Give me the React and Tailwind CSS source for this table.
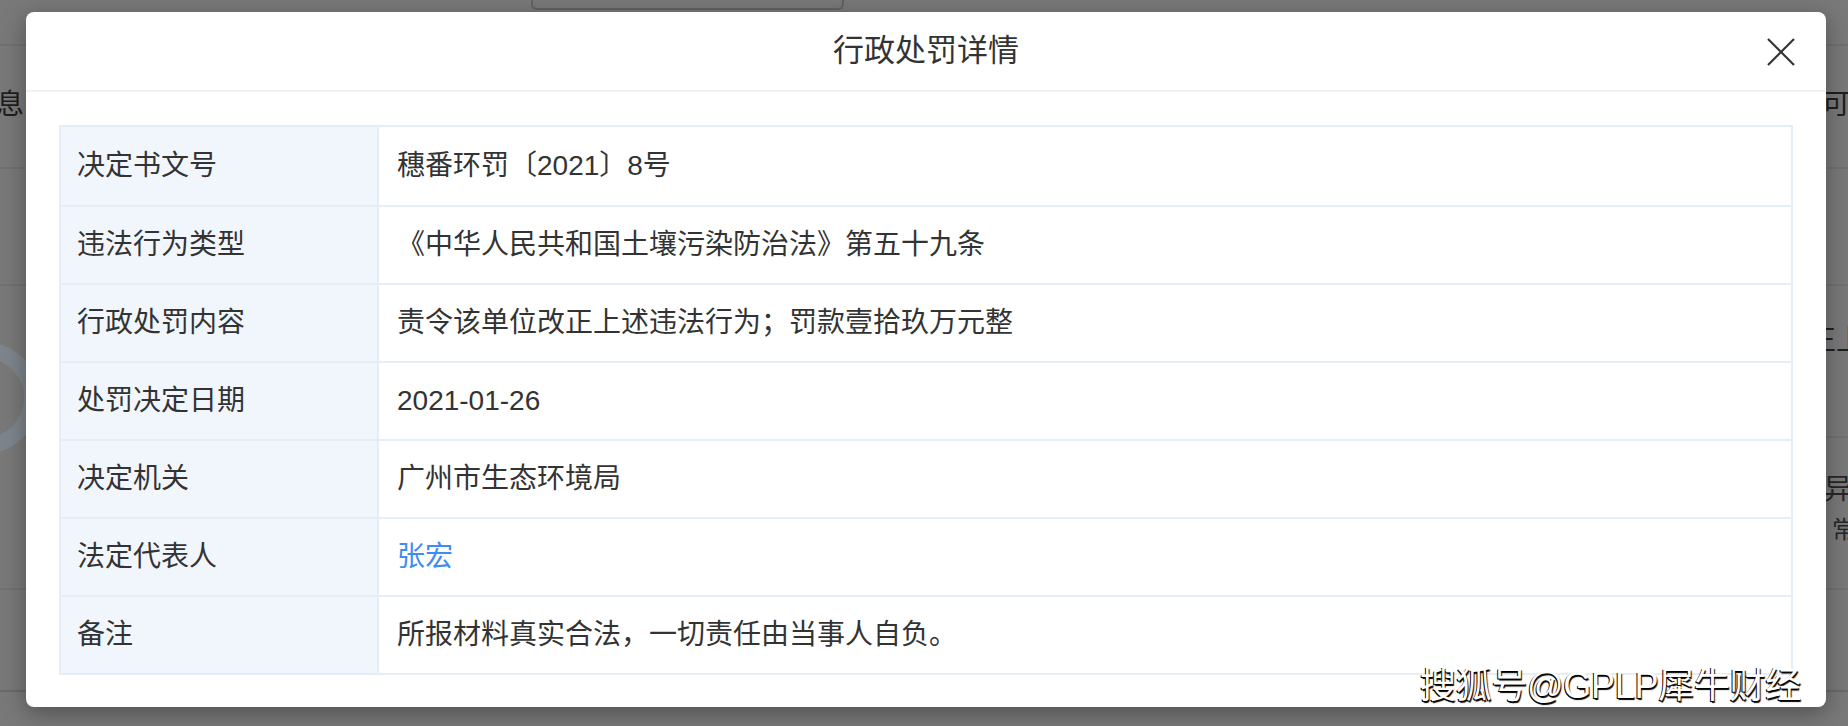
import React from 'react';

const rows = [
  { label: '决定书文号', value: '穗番环罚〔2021〕8号' },
  { label: '违法行为类型', value: '《中华人民共和国土壤污染防治法》第五十九条' },
  { label: '行政处罚内容', value: '责令该单位改正上述违法行为；罚款壹拾玖万元整' },
  { label: '处罚决定日期', value: '2021-01-26' },
  { label: '决定机关', value: '广州市生态环境局' },
  { label: '法定代表人', value: '张宏', link: true },
  { label: '备注', value: '所报材料真实合法，一切责任由当事人自负。' },
];

function BackdropPage() {
  // the page underneath the dialog, dimmed by the mask
  return (
    <div className="flex flex-col text-[28px] text-[#1e1e1e]">
      <div className="h-[44px]">
        <div className="ml-[531px] w-[313px] h-[10px] border-2 border-t-0 border-[#636363] rounded-b-[6px]" />
      </div>
      <div className="h-[123px] border-t-2 border-[#717171] flex items-center justify-between">
        <span className="-ml-[4px] -mt-[4px]">息</span>
        <span className="w-[26px] whitespace-nowrap -mt-[4px]">可查</span>
      </div>
      <div className="h-[117px] border-t-2 border-[#717171]" />
      <div className="relative h-[152px] border-t-2 border-[#717171] flex justify-end">
        <div className="absolute -left-[72px] top-[56px] w-[112px] h-[112px] rounded-full border-[16px] border-[#7e858c]" />
        <span className="w-[40px] whitespace-nowrap mt-[34px]">正上</span>
      </div>
      <div className="h-[152px] border-t-2 border-[#717171] flex flex-col items-end text-[#262626]">
        <span className="w-[24px] whitespace-nowrap mt-[32px] leading-[40px]">异常</span>
        <span className="w-[16px] whitespace-nowrap leading-[40px] text-[24px]">常</span>
      </div>
      <div className="h-[102px] border-t-2 border-[#717171]" />
      <div className="h-[36px] border-t-2 border-[#6a6a6a]" />
    </div>
  );
}

export default function App() {
  return (
    <div className="relative h-[726px] w-[1848px] overflow-hidden bg-[#797979] font-['Liberation_Sans','Noto_Sans_CJK_SC',sans-serif]">
      <BackdropPage />

      <div className="absolute left-[26px] top-[12px] w-[1800px] bg-white rounded-[8px] shadow-[0_6px_24px_rgba(0,0,0,0.35)]">
        <div className="relative h-[80px] flex items-center justify-center border-b-2 border-[#f0f0f0]">
          <span className="text-[31px] text-[#333]">行政处罚详情</span>
          <button className="absolute right-[31px] top-[26px] text-[#333]">
            <svg width="28" height="28" viewBox="0 0 28 28" fill="none" stroke="currentColor" strokeWidth="2.2">
              <line x1="1" y1="1" x2="27" y2="27" />
              <line x1="27" y1="1" x2="1" y2="27" />
            </svg>
          </button>
        </div>

        <div className="px-[33px] pt-[33px] pb-[32px]">
          <div className="border-2 border-[#e5edf7]">
            {rows.map((r, i) => (
              <div key={r.label} className={`grid grid-cols-[318px_1fr] h-[78px] ${i > 0 ? 'border-t-2 border-[#e5edf7]' : 'h-[76px]'}`}>
                <div className="bg-[#f1f6fc] border-r-2 border-[#e5edf7] flex items-center pl-[16px] text-[28px] text-[#333]">
                  {r.label}
                </div>
                <div className={`flex items-center pl-[18px] text-[28px] ${r.link ? 'text-[#3f8cf4]' : 'text-[#333]'}`}>
                  {r.value}
                </div>
              </div>
            ))}
          </div>
        </div>
      </div>

      <div className="absolute right-[47px] top-[659px] text-[36px] text-white tracking-[-0.3px] [text-shadow:-1px_1px_0_#000,1px_2px_1px_#000]">
        搜狐号@GPLP犀牛财经
      </div>
    </div>
  );
}
